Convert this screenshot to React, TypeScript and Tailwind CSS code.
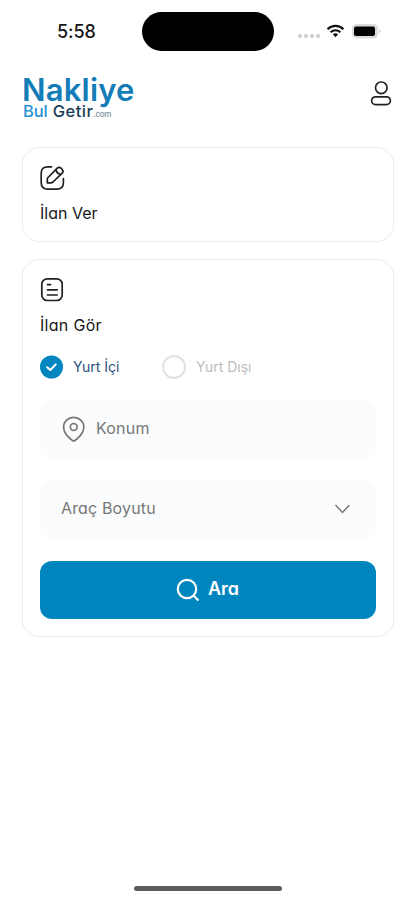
import React from "react";

function StatusBar() {
  return (
    <div className="flex h-[64px] items-start">
      <div className="ml-[57px] mt-[20px] w-[85px] text-[18px] leading-[24px] font-medium tracking-[-0.1px] text-[#161616]">5:58</div>
      <div className="mt-[12px] h-[39px] w-[132px] rounded-full bg-black" />
      <div className="ml-[24px] mt-[34px] flex gap-[2px]">
        {[0, 1, 2, 3].map((i) => (
          <span key={i} className="size-[4px] rounded-full bg-[#cdcdcd]" />
        ))}
      </div>
      <svg className="ml-[6px] mt-[24px]" width="19" height="14" viewBox="0 0 19 14" fill="none" stroke="#111" strokeWidth="2.2">
        <path d="M1.6 5.2 C6 .8 13 .8 17.4 5.2" />
        <path d="M4.6 8.2 C7.4 5.6 11.6 5.6 14.4 8.2" />
        <path d="M6.8 10.2 Q9.5 8.2 12.2 10.2 L9.5 13.2Z" fill="#111" stroke="none" />
      </svg>
      <svg className="ml-[6px] mt-[23px]" width="31" height="17" viewBox="0 0 31 17">
        <rect x="1" y="1" width="26" height="14.5" rx="4.5" fill="#dcdcdc" />
        <rect x="3" y="3.5" width="21" height="9.5" rx="2" fill="#000" />
        <path d="M28 6 L30 8.2 L28 10.4Z" fill="#cfcfcf" />
      </svg>
    </div>
  );
}

function Header() {
  return (
    <header className="flex h-[83px] items-start justify-between pl-[22px] pr-[22px]">
      <div className="pt-[10px]">
        <div className="h-[29px] whitespace-nowrap text-[31px] leading-[31px] font-semibold tracking-[0.2px] text-[#147db7]">Nakliye</div>
        <div className="flex items-baseline whitespace-nowrap pl-[1px] text-[16.5px] leading-[16px] font-medium">
          <span className="tracking-[-0.1px] text-[#2991d3]">Bul</span>
          <span className="ml-[5px] tracking-[0.5px] text-[#173d59]">Getir</span>
          <span className="text-[8px] tracking-[-0.3px] text-[#7d909c]">.com</span>
        </div>
      </div>
      <svg className="mt-[15px]" width="24" height="30" viewBox="0 0 24 30" fill="none" stroke="#222" strokeWidth="1.7">
        <circle cx="12.3" cy="8.8" r="5.8" />
        <rect x="2.6" y="17.8" width="18.8" height="7.8" rx="3.9" />
      </svg>
    </header>
  );
}

function EditIcon() {
  return (
    <svg width="26" height="26" viewBox="0 0 26 26" fill="none" stroke="#202020" strokeWidth="1.7" strokeLinecap="round" strokeLinejoin="round">
      <path d="M11.5 1.8 H7.8 Q1.2 1.8 1.2 8.4 V17.6 Q1.2 24.2 7.8 24.2 H16.8 Q23.4 24.2 23.4 17.6 V13.5" />
      <path d="M7.3 17.8 V14.2 Q7.3 13.2 8 12.5 L17.3 3.1 Q19 1.4 21 3.2 L22.2 4.5 Q23.9 6.4 22.2 8.1 L13 17 Q12 17.8 10.9 17.8Z" />
      <path d="M15.8 4.8 Q16.8 8.5 20.5 9.6" />
    </svg>
  );
}

function ListIcon() {
  return (
    <svg width="26" height="26" viewBox="0 0 26 26" fill="none" stroke="#202020" strokeWidth="1.7" strokeLinecap="round">
      <rect x="1.8" y="1.8" width="20.4" height="21.7" rx="5.5" />
      <path d="M7.5 7.6 H10.5 M7.5 12.8 H17.2 M7.5 18 H17.2" />
    </svg>
  );
}

export default function App() {
  return (
    <div className="h-[900px] w-[415px] overflow-hidden bg-white font-['Inter','Noto_Sans',sans-serif]">
      <StatusBar />
      <Header />
      <main className="flex h-[735px] flex-col gap-[17px] pl-[22px] pr-[21px] [font-feature-settings:'cv11']">
        <section className="h-[95px] shrink-0 rounded-[17px] border border-[#ececec] pl-[17px] pt-[17px]">
          <EditIcon />
          <div className="mt-[11px] text-[16px] leading-[22px] text-[#171717]">İlan Ver</div>
        </section>
        <section className="h-[378px] shrink-0 rounded-[17px] border border-[#ececec] px-[17px] pt-[17px]">
          <ListIcon />
          <div className="mt-[11px] text-[16px] leading-[22px] tracking-[0.3px] text-[#171717]">İlan Gör</div>
          <div className="mt-[19px] flex h-[24px] items-center text-[14px] leading-[20px]">
            <svg width="23" height="24" viewBox="0 0 23 24" fill="none">
              <circle cx="11.5" cy="12" r="11.5" fill="#0085bf" />
              <path d="M7.2 12.2 L10.3 15 L15.8 9.4" stroke="white" strokeWidth="2" strokeLinecap="round" strokeLinejoin="round" />
            </svg>
            <span className="-mt-px ml-[10px] w-[89px] text-[#2c5380]">Yurt İçi</span>
            <span className="size-[24px] rounded-full border-[2.5px] border-[#e0e1e2]" />
            <span className="-mt-px ml-[10px] text-[#bdbdbd]">Yurt Dışı</span>
          </div>
          <div className="mt-[21px] flex h-[60px] items-center rounded-[13px] bg-[#fafcfd] pb-[3px] pl-[22px] text-[16px] text-[#777]">
            <svg className="mt-px" width="24" height="27" viewBox="0 0 24 27" fill="none" stroke="#777" strokeWidth="1.7">
              <path d="M11.7 25 Q9.8 24.5 5.4 19.8 Q1.6 15.7 1.6 11 A10.1 9.7 0 0 1 21.8 11 Q21.8 15.7 18 19.8 Q13.6 24.5 11.7 25Z" />
              <circle cx="11.7" cy="10.9" r="3.4" />
            </svg>
            <span className="-mt-px ml-[10px] tracking-[0.2px]">Konum</span>
          </div>
          <div className="mt-[20px] flex h-[60px] items-center justify-between rounded-[13px] bg-[#fafcfd] pb-[3px] pl-[21px] pr-[25px] text-[16px] text-[#777]">
            <span className="-mt-px tracking-[0.15px]">Araç Boyutu</span>
            <svg className="mt-px" width="17" height="10" viewBox="0 0 17 10" fill="none" stroke="#777" strokeWidth="1.5">
              <path d="M1.5 1 L8.5 8.5 L15.5 1" />
            </svg>
          </div>
          <button className="mt-[20.5px] flex h-[58.5px] w-full items-center justify-center rounded-[12px] bg-[#0085bf] pr-px text-[18px] font-semibold text-white">
            <svg width="24" height="24" viewBox="0 0 24 24" fill="none" stroke="white" strokeWidth="2.2">
              <circle cx="11" cy="11" r="9.2" />
              <path d="M17.5 17.5 L22.5 22.5" />
            </svg>
            <span className="-mt-[2px] ml-[8px]">Ara</span>
          </button>
        </section>
      </main>
      <div className="mx-auto mt-[4px] h-[5px] w-[148px] rounded-full bg-[#5d5d5d]" />
    </div>
  );
}
